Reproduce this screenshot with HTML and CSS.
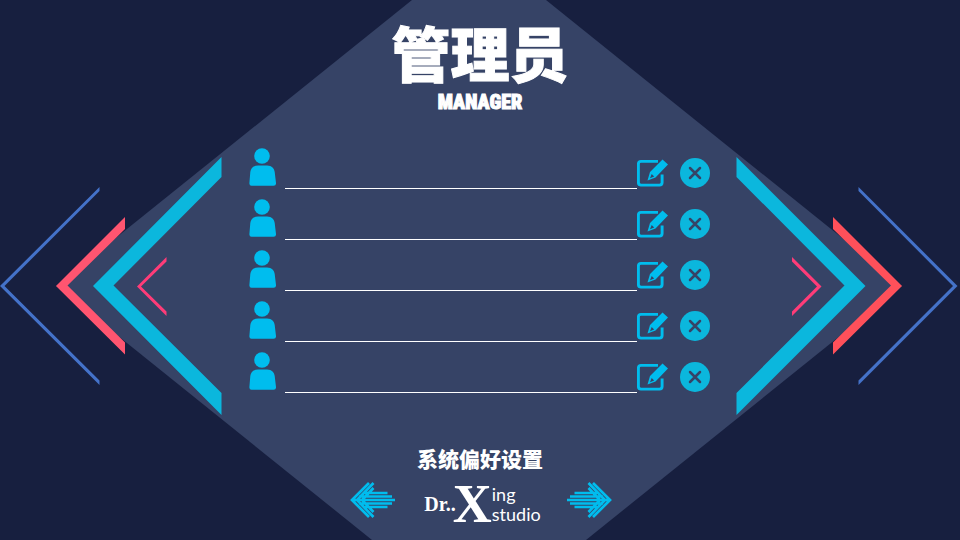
FILE: index.html
```html
<!DOCTYPE html>
<html lang="zh-CN">
<head>
<meta charset="utf-8">
<meta name="viewport" content="width=device-width, initial-scale=1">
<title>管理员</title>
<link rel="stylesheet" href="styles.css">
</head>
<body>
<svg class="backdrop" viewBox="0 0 960 540" preserveAspectRatio="xMidYMid slice" aria-hidden="true">
  <path fill="#364366" d="M412 0H546L902 286L586 540H372L56 286Z"/>
  <path fill="#4472c9" d="M99.500 187V191L4.500 286L99.500 380.500V385L0 286ZM858.500 187V191L953 286L858.500 380.500V385L957.500 286Z"/>
  <path fill="#ff5570" d="M125 217V229L67.500 285.500L125 342.500V354.500L56 286Z"/>
  <path fill="#ff505a" d="M833 217V229L891 285.500L833 342.500V354.500L902 286Z"/>
  <path fill="#0bb7dd" d="M221.500 157V177L113.500 285.500L221.500 393V415L93 286ZM736.500 157V177L844.500 285.500L736.500 393V415L865.500 286Z"/>
  <path fill="#ff3c78" d="M166.500 257V261.500L141 286.500L166.500 311.500V316L137 286.500ZM792 257V261.500L817 286.500L792 311.500V316L821.500 286.500Z"/>
</svg>

<svg class="sprite" aria-hidden="true">
  <symbol id="user" viewBox="0 0 28 38">
    <circle cx="13" cy="8" r="7.800"/>
    <path d="M9 17.500H18C23 17.500 25.300 20.500 25.700 24L27 35Q27.300 37.800 24.500 37.800H2.500Q.2 37.800 .4 35L1.300 24C1.700 20.500 4 17.500 9 17.500Z"/>
  </symbol>
  <symbol id="edit" viewBox="0 0 32 28">
    <path fill="none" stroke="currentColor" stroke-width="2.900" d="M21 2.400H4Q1.400 2.400 1.400 5V23.500Q1.400 26.100 4 26.100H22.500Q25.100 26.100 25.100 23.500V15.500"/>
    <path fill-rule="evenodd" d="M25.500 .5L31 5.500L18.500 18.500L10.500 21.500L13 13ZM14.700 15L13 19.200L17.200 17.400Z"/>
  </symbol>
  <symbol id="remove" viewBox="0 0 30 30">
    <circle cx="15" cy="15" r="15"/>
    <path class="cross" d="M10 10L20 20M20 10L10 20"/>
  </symbol>
  <symbol id="arrow" viewBox="0 0 46 36">
    <path fill="none" stroke="currentColor" stroke-width="2.700" d="M19 1L2 18L19 35M23.500 1L7 18L23.500 35M23.500 6L12 18L23.500 30M2 18H45M9 14.500H42M9 21.500H42M14 11H37.500M14 25H37.500"/>
  </symbol>
</svg>

<main class="page">
  <header class="heading">
    <h1 class="title">管理员</h1>
    <p class="subtitle">MANAGER</p>
  </header>

  <form class="managers">
    <div class="row">
      <label class="person" for="m1" aria-label="管理员 1"><svg class="user"><use href="#user"/></svg></label>
      <input class="name" id="m1" type="text">
      <button class="edit" type="button" aria-label="编辑"><svg><use href="#edit"/></svg></button>
      <button class="remove" type="button" aria-label="删除"><svg><use href="#remove"/></svg></button>
    </div>
    <div class="row">
      <label class="person" for="m2" aria-label="管理员 2"><svg class="user"><use href="#user"/></svg></label>
      <input class="name" id="m2" type="text">
      <button class="edit" type="button" aria-label="编辑"><svg><use href="#edit"/></svg></button>
      <button class="remove" type="button" aria-label="删除"><svg><use href="#remove"/></svg></button>
    </div>
    <div class="row">
      <label class="person" for="m3" aria-label="管理员 3"><svg class="user"><use href="#user"/></svg></label>
      <input class="name" id="m3" type="text">
      <button class="edit" type="button" aria-label="编辑"><svg><use href="#edit"/></svg></button>
      <button class="remove" type="button" aria-label="删除"><svg><use href="#remove"/></svg></button>
    </div>
    <div class="row">
      <label class="person" for="m4" aria-label="管理员 4"><svg class="user"><use href="#user"/></svg></label>
      <input class="name" id="m4" type="text">
      <button class="edit" type="button" aria-label="编辑"><svg><use href="#edit"/></svg></button>
      <button class="remove" type="button" aria-label="删除"><svg><use href="#remove"/></svg></button>
    </div>
    <div class="row">
      <label class="person" for="m5" aria-label="管理员 5"><svg class="user"><use href="#user"/></svg></label>
      <input class="name" id="m5" type="text">
      <button class="edit" type="button" aria-label="编辑"><svg><use href="#edit"/></svg></button>
      <button class="remove" type="button" aria-label="删除"><svg><use href="#remove"/></svg></button>
    </div>
  </form>

  <footer class="footer">
    <h2 class="settings">系统偏好设置</h2>
    <div class="pager">
      <button class="arrow" type="button" aria-label="上一页"><svg><use href="#arrow"/></svg></button>
      <div class="brand">
        <span class="dr">Dr..</span>
        <span class="x">X</span>
        <span class="studio"><span>ing</span><span>studio</span></span>
      </div>
      <button class="arrow next" type="button" aria-label="下一页"><svg><use href="#arrow"/></svg></button>
    </div>
  </footer>
</main>
</body>
</html>
```
FILE: styles.css
```css
* {
  box-sizing: border-box;
}

body {
  margin: 0;
  min-height: 100vh;
  background: #171f3f;
  color: #fff;
  font-family: "Noto Sans CJK SC", sans-serif;
}

.backdrop {
  position: absolute;
  inset: 0;
  width: 100%;
  height: 100%;
}

.sprite {
  position: absolute;
  width: 0;
  height: 0;
}

.page {
  position: relative;
  display: flex;
  flex-direction: column;
  align-items: center;
  min-height: 100vh;
  padding: 20px 0 14px;
}

.heading,
.footer {
  display: flex;
  flex-direction: column;
  align-items: center;
}

.title,
.subtitle,
.settings {
  margin: 0;
  font-weight: 900;
}

.title {
  font-size: 59px;
  line-height: 64px;
  -webkit-text-stroke: 1px #fff;
}

.subtitle {
  margin-top: 6px;
  font-family: "Roboto Condensed", "Open Sans Condensed", Roboto, sans-serif;
  font-size: 20px;
  line-height: 24px;
  -webkit-text-stroke: 1px #fff;
}

.managers {
  display: flex;
  flex-direction: column;
  gap: 10px;
  width: 90%;
  max-width: 462px;
  margin-top: 34px;
}

.row {
  display: flex;
  align-items: flex-end;
  height: 41px;
}

button {
  display: block;
  padding: 0;
  border: 0;
  background: none;
  color: #00bdee;
  cursor: pointer;
}

svg {
  display: block;
  fill: currentColor;
}

.person {
  align-self: flex-start;
  margin-right: 8px;
  color: #00bdee;
}

.user {
  width: 28px;
  height: 38px;
}

.name {
  flex: 1;
  min-width: 0;
  height: 30px;
  padding: 0 8px;
  border: 0;
  border-bottom: 1px solid #fff;
  background: none;
  color: #fff;
  font: 18px "Noto Sans CJK SC", sans-serif;
  outline: 0;
}

.edit svg {
  width: 32px;
  height: 28px;
}

.edit {
  margin-bottom: 2px;
}

.remove {
  margin: 0 1px 1px 11px;
  color: #0bb7dd;
}

.remove svg {
  width: 30px;
  height: 30px;
}

.cross {
  fill: none;
  stroke: #364366;
  stroke-width: 2.5;
  stroke-linecap: round;
}

.footer {
  margin-top: auto;
}

.settings {
  font-size: 21px;
  line-height: 28px;
}

.pager {
  display: flex;
  align-items: flex-start;
  justify-content: space-between;
  width: 262px;
  margin: 10px 0 0 2px;
}

.arrow svg {
  width: 46px;
  height: 36px;
}

.next svg {
  transform: scaleX(-1);
}

.brand {
  display: flex;
  align-items: center;
  height: 44px;
  margin-left: 3px;
  font-family: Lato, sans-serif;
}

.dr {
  font-family: "Liberation Serif", serif;
  font-size: 20px;
  font-weight: 700;
}

.x {
  margin-left: -3px;
  font-family: "Liberation Serif", serif;
  font-size: 54px;
  font-weight: 700;
  line-height: 40px;
}

.studio {
  display: flex;
  flex-direction: column;
  font-size: 18px;
  line-height: 20px;
}
```
